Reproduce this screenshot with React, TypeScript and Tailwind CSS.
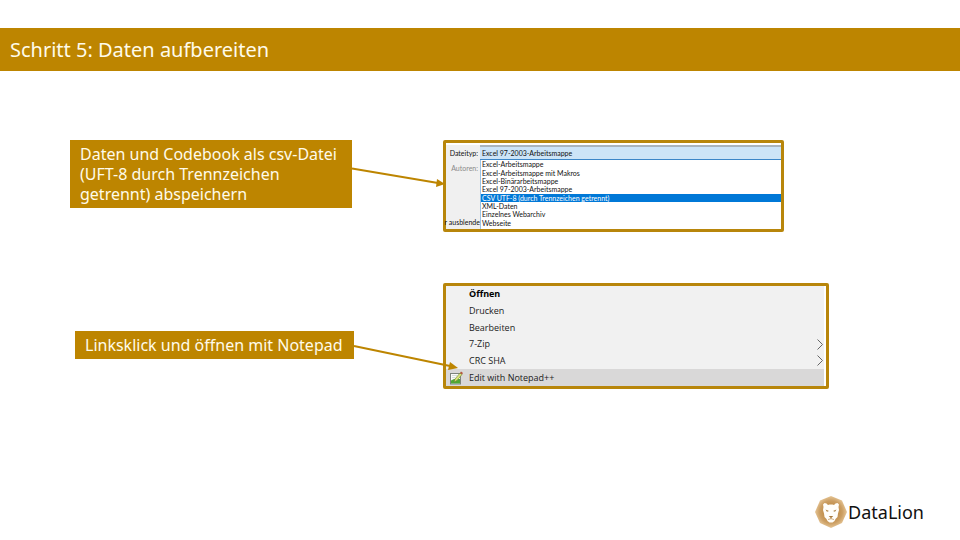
import type { ReactNode } from "react";

const fileTypes = [
  "Excel-Arbeitsmappe",
  "Excel-Arbeitsmappe mit Makros",
  "Excel-Binärarbeitsmappe",
  "Excel 97-2003-Arbeitsmappe",
  "CSV UTF-8 (durch Trennzeichen getrennt)",
  "XML-Daten",
  "Einzelnes Webarchiv",
  "Webseite",
];

const menuItems = [
  { label: "Öffnen", bold: true },
  { label: "Drucken" },
  { label: "Bearbeiten" },
  { label: "7-Zip", submenu: true },
  { label: "CRC SHA", submenu: true },
  { label: "Edit with Notepad++", active: true },
];

function Callout({ className, children }: { className: string; children: ReactNode }) {
  return (
    <p className={`shrink-0 bg-[#bd8500] px-[10px] py-1 text-[16px] leading-5 text-[#fffbea] ${className}`}>
      {children}
    </p>
  );
}

function SaveAsDialog() {
  return (
    <div className="flex h-[92px] w-[341px] rounded-[2px] border-3 border-[#b8860b] bg-white pt-[2px] font-['Lato','Open_Sans',sans-serif] text-[7px] leading-[8px] text-[#111]">
      <div className="flex w-[34px] shrink-0 flex-col items-end bg-[#f0f0f0] pt-[4px] whitespace-nowrap">
        <label htmlFor="dateityp" className="pr-[2px]">Dateityp:</label>
        <span className="mt-[7px] pr-[2px] text-[#8a8a8a]">Autoren:</span>
        <span className="mt-auto mb-[3px]">r ausblende</span>
      </div>
      <div className="flex flex-1 flex-col">
        <select
          id="dateityp"
          defaultValue="Excel 97-2003-Arbeitsmappe"
          className="h-[15px] w-full appearance-none border-t-2 border-b border-t-[#a9b4bd] border-b-[#3b86c8] bg-[#cce4f7] pl-[2px] text-[7px] leading-[8px] outline-none"
        >
          {fileTypes.map((type) => (
            <option key={type}>{type}</option>
          ))}
        </select>
        <ul role="listbox" aria-label="Dateityp" className="grid flex-1 grid-rows-8 border-l border-[#9cc3e4] pb-[2px]">
          {fileTypes.map((type, index) => (
            <li
              key={type}
              role="option"
              aria-selected={index === 4}
              className={`flex items-center pl-px ${index === 4 ? "bg-[#0078d7] text-white" : ""}`}
            >
              {type}
            </li>
          ))}
        </ul>
      </div>
    </div>
  );
}

function NotepadIcon() {
  return (
    <svg viewBox="0 0 14 14" className="size-[14px]" aria-hidden="true">
      <rect x="1.5" y="2.5" width="10" height="10.500" fill="#fafafa" stroke="#7c837c" />
      <path d="M2 12.500V9.500l3-1.500h6v4.500z" fill="#4fa832" />
      <path d="M3 4.500h5M3 6.500h3" stroke="#d5ded8" />
      <path d="m5 11 1-3 5-6 2 1.500-5 6z" fill="#d9e67a" stroke="#6b7a32" strokeWidth=".6" />
      <path d="m11 2 1-1.500 2 1.500-1 1.500z" fill="#b5563c" />
    </svg>
  );
}

function ContextMenu() {
  return (
    <div className="h-[106px] w-[386px] rounded-[2px] border-3 border-[#b8860b] bg-[#f1f1f1] font-['Open_Sans','Noto_Sans',sans-serif] text-[9px] leading-3 text-[#222]">
      <ul role="menu" className="grid h-full grid-rows-6 border-r-2 border-white">
        {menuItems.map((item) => (
          <li key={item.label} role="none" className="flex">
            <button
              type="button"
              role="menuitem"
              className={`flex w-full items-center ${item.active ? "bg-[#d9d8d8]" : ""} ${item.bold ? "font-bold text-black" : ""}`}
            >
              <span className="w-[23px] shrink-0 pl-[3px]">{item.active && <NotepadIcon />}</span>
              <span>{item.label}</span>
              {item.submenu && (
                <svg viewBox="0 0 6 11" className="mr-px ml-auto h-[11px] w-[6px]" aria-hidden="true">
                  <path d="m.5.5 5 5-5 5" fill="none" stroke="#666" />
                </svg>
              )}
            </button>
          </li>
        ))}
      </ul>
    </div>
  );
}

function Logo() {
  return (
    <div className="flex items-center gap-px">
      <svg viewBox="0 0 32 32" className="size-8" aria-hidden="true">
        <defs>
          <radialGradient id="mane">
            <stop offset="0.3" stopColor="#bd8842" />
            <stop offset="0.7" stopColor="#cb9e62" />
            <stop offset="1" stopColor="#e6c697" />
          </radialGradient>
        </defs>
        <path d="m16 0 11 4.500L32 16l-5 11-11 5-11-5L0 16 5 4.500z" fill="url(#mane)" />
        <path
          d="M8 8.500 9.500 7l2 .5 1.500 1.500 1.500-.5h3l1.500.5L20.500 7.500l2-.5L24 8.500l-.5 2.500.5 3-1 3.500-.5 3.500-2 2-1 2-2 1.500h-3l-2-1.500-1-2-2-2L9 17.500 8 14l.5-3z"
          fill="#fffefa"
        />
        <path d="m10.500 13.500 3.500 1.500-2 .8zM21.500 13.500 18 15l2 .8zM13.700 20h4.600L16 22.200z" fill="#a87a3d" />
        <path d="m13 23.500 3-.8 3 .8M16 22v1" fill="none" stroke="#b98c52" strokeWidth=".7" />
      </svg>
      <span className="text-[18px] leading-6 text-[#111]">DataLion</span>
    </div>
  );
}

export default function App() {
  return (
    <div className="flex min-h-screen flex-col bg-white pt-7 font-['Noto_Sans','Open_Sans',sans-serif]">
      <header className="flex h-[43px] items-center bg-[#bd8500] px-[10px]">
        <h1 className="text-[20px] leading-6 text-[#fffbea]">Schritt 5: Daten aufbereiten</h1>
      </header>
      <main className="flex flex-col gap-[51px] pt-[69px]">
        <section className="flex items-start pl-[70px]">
          <Callout className="w-[282px]">
            Daten und Codebook als csv-Datei
            <br />
            (UFT-8 durch Trennzeichen
            <br />
            getrennt) abspeichern
          </Callout>
          <svg viewBox="0 0 91 60" className="z-10 h-[60px] w-[91px] shrink-0 overflow-visible" aria-hidden="true">
            <path d="M0 28.500 86 43" stroke="#bd8500" strokeWidth="2" />
            <path d="m85 39 8 5-9 3z" fill="#bd8500" />
          </svg>
          <SaveAsDialog />
        </section>
        <section className="flex items-start pl-[75px]">
          <div className="z-10 flex items-start pt-12">
            <Callout className="w-[279px]">Linksklick und öffnen mit Notepad</Callout>
            <svg viewBox="0 0 89 40" className="h-[40px] w-[89px] shrink-0 overflow-visible" aria-hidden="true">
              <path d="M0 15 96 35" stroke="#bd8500" strokeWidth="2" />
              <path d="m96 31 8 6-10 2z" fill="#bd8500" />
            </svg>
          </div>
          <ContextMenu />
        </section>
      </main>
      <footer className="mt-auto flex justify-end pr-[36px] pb-3">
        <Logo />
      </footer>
    </div>
  );
}
